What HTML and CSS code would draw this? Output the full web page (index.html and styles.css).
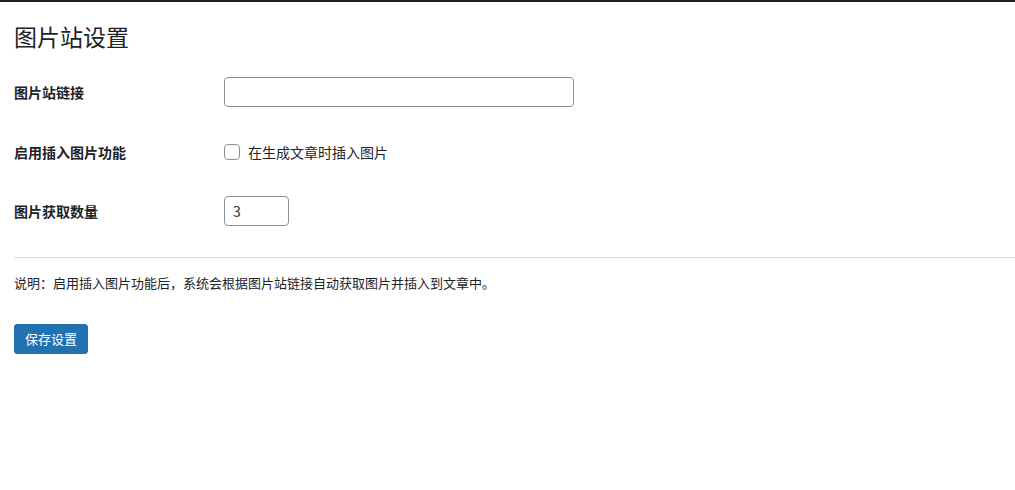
FILE: index.html
```html
<!DOCTYPE html>
<html lang="zh-CN">
<head>
<meta charset="utf-8">
<title>图片站设置</title>
<link rel="stylesheet" href="styles.css">
</head>
<body>
<div class="topbar"></div>
<div class="wrap">
  <h1 class="title">图片站设置</h1>
  <form class="form">
    <div class="row">
      <label class="label" for="site">图片站链接</label>
      <div class="field"><input id="site" class="text-input" type="text"></div>
    </div>
    <div class="row">
      <div class="label">启用插入图片功能</div>
      <div class="field">
        <label class="check"><input type="checkbox" class="checkbox"><span>在生成文章时插入图片</span></label>
      </div>
    </div>
    <div class="row">
      <label class="label" for="count">图片获取数量</label>
      <div class="field"><input id="count" class="num-input" type="text" value="3"></div>
    </div>
    <hr class="divider">
    <p class="desc">说明：启用插入图片功能后，系统会根据图片站链接自动获取图片并插入到文章中。</p>
    <button type="button" class="button">保存设置</button>
  </form>
</div>
</body>
</html>
```

FILE: styles.css
```css
html, body {
  margin: 0;
  padding: 0;
  background: #fff;
}
body {
  font-family: "Noto Sans CJK SC", "Open Sans", sans-serif;
  font-size: 13px;
  color: #1d2327;
}
.topbar {
  height: 2px;
  background: #1d2327;
}
.wrap {
  padding: 0 0 0 14px;
}
.title {
  margin: 19px 0 0;
  font-size: 23px;
  line-height: 30px;
  font-weight: 400;
  color: #1d2327;
}
.form {
  margin-top: 11px;
}
.row {
  display: grid;
  grid-template-columns: 210px 1fr;
  align-items: center;
  min-height: 30px;
  padding: 15px 0;
}
.row + .row + .row {
  padding-top: 14px;
}
.label {
  font-size: 14px;
  font-weight: 700;
  line-height: 20px;
}
.field {
  display: flex;
  align-items: center;
  font-size: 14px;
}
.text-input, .num-input {
  box-sizing: border-box;
  height: 30px;
  border: 1px solid #8c8f94;
  border-radius: 4px;
  background: #fff;
  font-family: inherit;
  font-size: 14px;
  color: #2c3338;
  padding: 0 8px;
  margin: 0;
}
.text-input { width: 350px; }
.num-input { width: 65px; }
.check {
  display: flex;
  align-items: center;
  gap: 8px;
  font-size: 14px;
  color: #1d2327;
}
.checkbox {
  appearance: none;
  -webkit-appearance: none;
  box-sizing: border-box;
  width: 16px;
  height: 16px;
  margin: 0;
  border: 1px solid #8c8f94;
  border-radius: 4px;
  background: #fff;
}
.divider {
  border: 0;
  border-top: 1px solid #dcdcde;
  margin: 16px 0 0;
}
.desc {
  margin: 14px 0 0;
  font-size: 13px;
  line-height: 22px;
  color: #1d2327;
}
.button {
  margin-top: 30px;
  height: 30px;
  padding: 0 10px;
  border: 1px solid #2271b1;
  border-radius: 3px;
  background: #2271b1;
  color: #fff;
  font-family: inherit;
  font-size: 13px;
  line-height: 28px;
  cursor: pointer;
}
```
